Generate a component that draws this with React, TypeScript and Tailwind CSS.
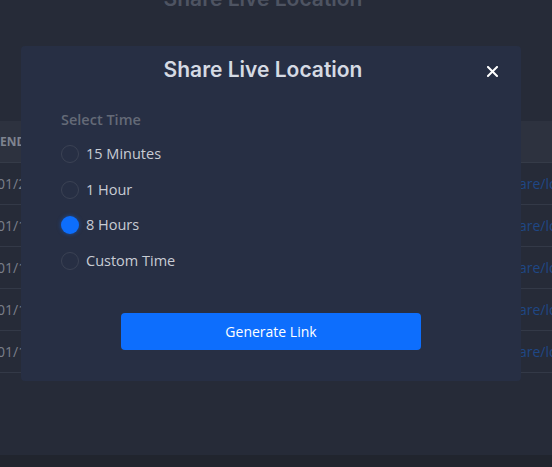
import React from "react";

const rows = ["01/24/2024", "01/19/2024", "01/19/2024", "01/19/2024", "01/19/2024"];
const options = ["15 Minutes", "1 Hour", "8 Hours", "Custom Time"];

export default function App() {
  return (
    <div className="relative w-[552px] h-[467px] overflow-hidden bg-[#262b38] font-['Open_Sans',sans-serif]">
      <div className="flex flex-col h-full">
        <div className="h-[121px] flex justify-center pr-[26px]">
          <div className="mt-[-15px] text-[21px] font-semibold text-[#4e5462] font-['Inter',sans-serif] leading-[28px]">
            Share Live Location
          </div>
        </div>
        <div className="flex flex-col">
          <div className="h-[42px] bg-[#2d323f] flex items-center justify-between border-b border-[#353b48]">
            <span className="text-[12px] font-bold text-[#7f8490] whitespace-nowrap">ENDED AT</span>
            <span />
          </div>
          {rows.map((r, i) => (
            <div key={i} className="h-[42px] flex items-center justify-between border-b border-[#333947]">
              <span className="ml-[-3px] text-[14px] text-[#7a7f8a] whitespace-nowrap">{r}</span>
              <span className="w-[33px] overflow-hidden text-[14px] text-[#1f4785] whitespace-nowrap">are/location</span>
            </div>
          ))}
        </div>
        <div className="flex-1" />
        <div className="h-[12px] bg-[#21252e]" />
      </div>

      <div className="absolute left-[21px] top-[46px] w-[500px] h-[335px] bg-[#272f44] rounded-[4px] flex flex-col">
        <div className="relative pt-[10px] pr-[16px] flex justify-center">
          <h2 className="text-[21px] font-semibold text-[#d5dae3] font-['Inter',sans-serif] leading-[28px]">
            Share Live Location
          </h2>
          <button className="absolute right-[22px] top-[18px] w-[14px] h-[14px] flex items-center justify-center">
            <svg width="11" height="11" viewBox="0 0 11 11">
              <path d="M1 1L10 10M10 1L1 10" stroke="#ffffff" strokeWidth="2" strokeLinecap="square" />
            </svg>
          </button>
        </div>
        <div className="pl-[40px] pt-[25px]">
          <div className="text-[14.5px] font-semibold text-[#646a77] leading-[22px]">Select Time</div>
          <div className="flex flex-col mt-[12px] gap-[13.6px]">
            {options.map((o, i) => (
              <label key={o} className="flex items-center gap-[7px] h-[22px]">
                {i === 2 ? (
                  <span className="w-[18px] h-[18px] rounded-full bg-[#0d6efd] shadow-[0_0_4px_rgba(13,110,253,0.5)]" />
                ) : (
                  <span className="w-[18px] h-[18px] rounded-full border border-[#3b4254]" />
                )}
                <span className="text-[14.5px] text-[#c8ccd4] leading-[22px]">{o}</span>
              </label>
            ))}
          </div>
        </div>
        <div className="flex justify-center mt-[41px]">
          <button className="w-[300px] h-[37px] rounded-[4px] bg-[#0d6efd] text-white text-[14px] font-medium">
            Generate Link
          </button>
        </div>
      </div>
    </div>
  );
}
